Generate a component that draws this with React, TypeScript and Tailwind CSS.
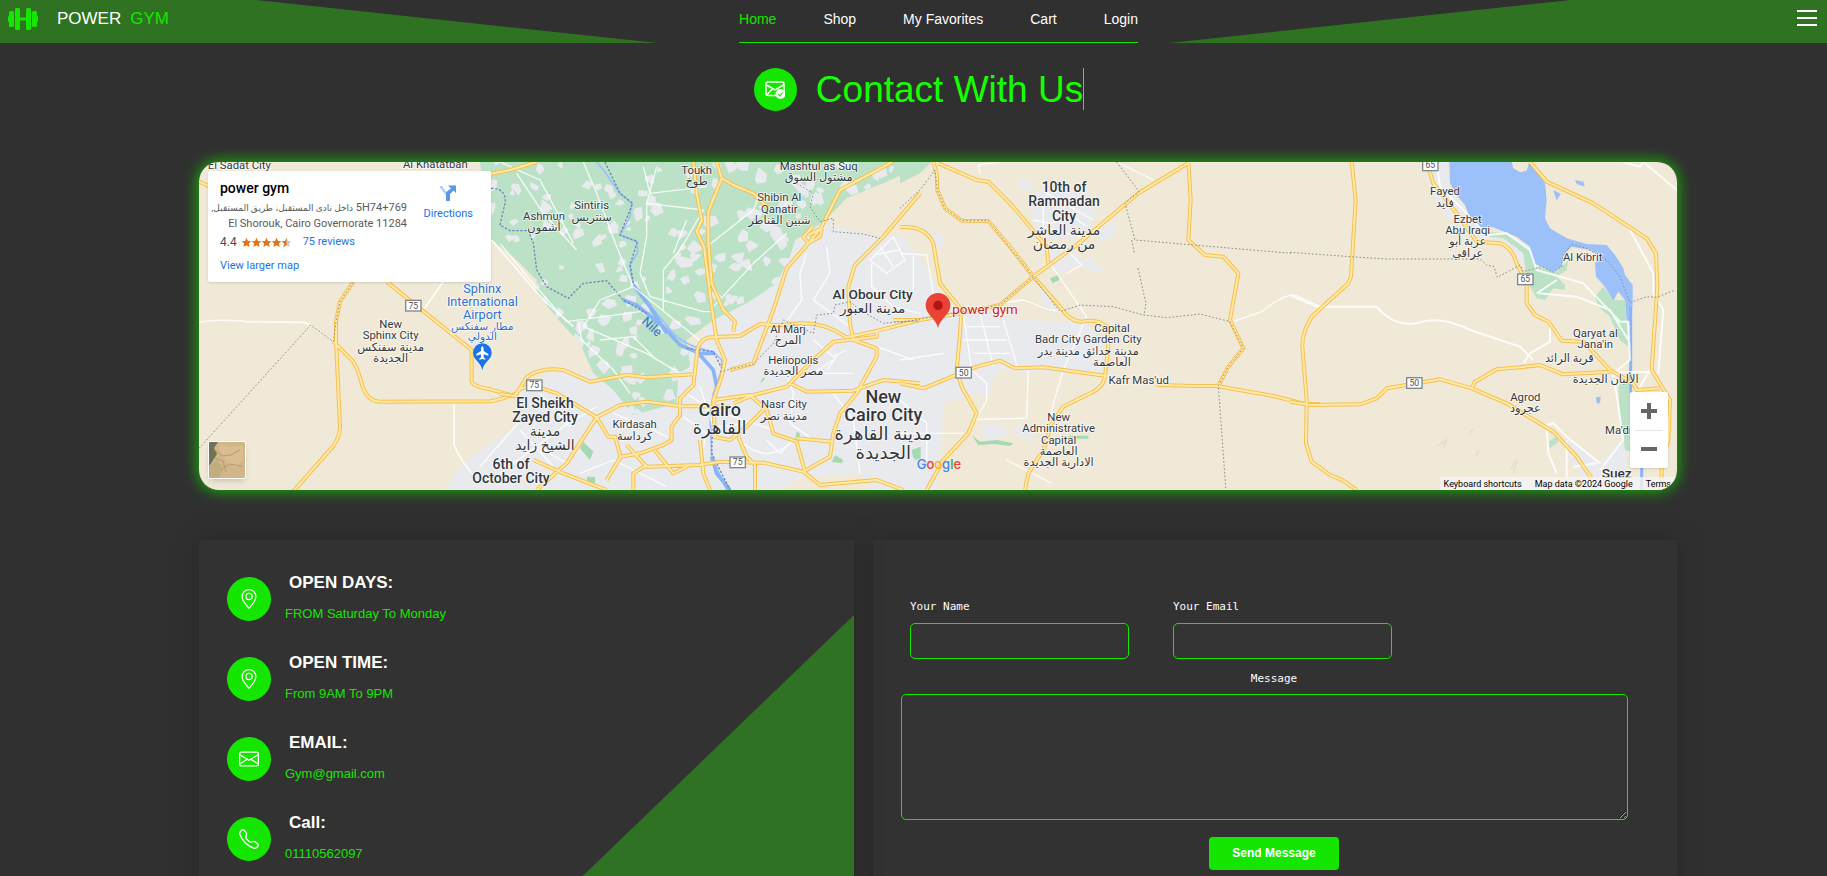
import React from "react";
import { BsEnvelope, BsGeoAlt, BsTelephone } from "react-icons/bs";

type Label = {
  x: number;
  y: number;
  lines: string[];
  size?: number;
  step?: number;
  weight?: number;
  color?: string;
};

const links = ["Home", "Shop", "My Favorites", "Cart", "Login"];

/* Map geometry: each list is drawn in its own quarter of the map canvas. */
const westRoads = [
  "M340 1054L445 935Q480 900 480 860L468 600V545L480 485L520 425",
  "M57 125L90 140",
  "M460 605L520 665Q535 690 545 730Q560 785 600 785L930 784Q960 780 1010 760",
  "M620 425L875 630V725Q880 740 930 748L1010 770",
  "M930 102L990 90L1070 66",
];

const cityRoads = [
  "M0 762L45 768L80 712Q120 680 190 690L270 725L380 705L440 712L580 703",
  "M45 768Q55 735 110 740L170 760L290 832L360 795L440 785L540 798L690 800",
  "M110 1050L200 970L290 832",
  "M290 832L325 890H345L362 950L320 1020",
  "M362 950L420 940L490 915L515 900V860L540 825V775L580 735L590 650Q590 600 630 592L720 588L780 552L840 556L900 550Q970 545 1040 592L1120 575L1260 540",
  "M380 915L440 980L600 975L660 965L790 968L910 995L990 950L1000 880L1020 820L1070 760L1130 650V625L1060 600L1050 550L1045 440L1065 375L1150 290L1260 160",
  "M460 925L520 1000L570 975",
  "M580 66L590 160L605 240L590 275L612 320L635 500L650 600L675 660L665 710L640 780L645 890",
  "M650 66L665 115L625 215V310L635 430L670 510L705 545L700 575",
  "M665 115L700 135L760 160L810 210",
  "M1200 50L1160 75L1020 150L965 260L925 310L860 385L820 510L760 670L690 690",
  "M925 285L965 265L960 290L925 310L910 290L940 258",
  "M640 780L750 765L800 810L820 880L890 905L915 995",
  "M700 790L760 765L860 740L940 660L1000 605L1130 590V570",
  "M870 730L920 755L1060 752L1150 720L1260 730",
  "M640 890L690 900L740 860L800 800",
  "M715 890L740 950L765 975V1050",
  "M600 900L610 1000L630 1050M890 895L1000 905",
  "M100 960L190 1000L320 1050M400 1050V1000L440 975",
  "M910 995L960 1035L1130 1020L1210 1050",
];

const eastRoads = [
  "M100 66L110 100L112 150L135 205L185 242L265 243L330 320L400 410L480 500Q510 545 545 545Q595 535 620 560L625 620L615 710Q610 745 560 765L490 800L455 850L430 930L385 1000L375 1050",
  "M115 70L230 120L265 125L335 195L410 285L440 320L445 370",
  "M-20 540L60 540L180 520L300 495L400 410L530 315L715 160L870 66",
  "M0 262Q75 255 100 310L120 430L185 510L180 580L170 690L185 740L230 820L205 880L130 960L80 1050",
  "M0 730L70 745L180 700L230 680L300 662L345 685L430 682L620 708",
  "M770 735L890 738L950 738L1120 768L1215 792L1260 792",
  "M865 66L872 180L865 300L915 345L970 350L1015 400L990 540L1030 625L985 680L955 738",
];

const suezRoads = [
  "M185 66L197 180L183 410L175 430L65 530Q35 580 37 620L50 780L48 910L65 965L120 1005L160 1022L200 1050",
  "M0 785L60 795L210 793L260 775L290 745L350 735L450 718L545 745L650 790L790 875L860 950L905 1015",
  "M415 80L430 130L500 220L560 305L630 310Q665 320 680 370L710 430V490L735 525L775 545L815 602L880 605L960 690L1030 730L1040 750L1110 745",
  "M720 66L770 125L910 190L1070 295L1098 340L1102 440L1085 690L1140 780L1135 900L1115 970V1050",
  "M545 745L555 725L620 688L690 682L750 675L820 703L960 695",
];

const cityStreets = [
  "M250 66L290 160L350 320L400 440L610 610",
  "M470 80L440 190V290L420 400L450 470L610 515L640 515",
  "M0 310L90 420L200 545L420 515",
  "M440 190L610 210L540 330L490 390V510",
  "M620 320L760 210L780 160",
  "M235 545L245 600L340 690L390 760",
  "M50 100L130 220L230 330M0 66L120 120L220 310",
  "M640 500L760 370L860 280",
  "M920 340L900 400L905 480L850 560M980 320L990 400L940 480L1050 560",
  "M1115 370V440L1180 500M1180 290L1215 360L1160 400L1110 360Z M1140 320L1180 380M1120 345L1200 330",
  "M1180 500L1260 520M1130 620L1240 660M940 600L1000 650L1040 630M960 700L1060 700",
  "M550 830L620 880L600 960M560 760L620 800L700 830L820 870M600 740L640 860L760 850",
  "M860 700L880 760L870 850L940 900M800 900L840 940L880 900M730 910Q800 970 870 910",
  "M0 1000L190 860L290 800M80 900L200 970M60 870L160 980M-60 980L80 820M120 760L210 860",
  "M400 440L300 480L250 560L440 640L540 700M300 600L400 590L470 660",
  "M430 80L450 160L620 140M560 240L520 340M340 820L440 860L500 890M240 1000L340 960L500 1040",
  "M1000 760L1060 840L1120 820M1060 840L1080 1000M940 700L1000 660M980 690L1010 650",
];

const eastStreets = [
  "M190 520L215 690L260 730V780L205 880M240 520L280 680M310 540L355 690M190 600L320 600M200 560L300 560M220 640L330 640",
  "M300 490L370 480L450 510L490 515M450 370L560 530L520 620L490 690M385 690L380 835L220 838",
  "M0 880L190 880M400 240L450 250L520 230L560 260M430 190V260L540 290M440 160L580 240M490 320L545 375L500 400",
  "M1000 545L1085 515Q1160 455 1190 467L1260 500M455 1030L320 960M490 690L460 790L450 850",
  "M0 340L80 345L110 520M40 350V460M0 660L130 640M0 780L80 850V960",
  "M650 66L760 120M240 100L235 75L300 66",
];

const suezStreets = [
  "M0 465L80 500H260Q310 560 380 550Q450 525 540 570L690 620L730 660",
  "M780 545V605L720 640L700 670",
  "M440 66L450 140L520 210L590 285L650 280L720 330L740 390L880 430L990 545H1015L1020 660L970 700L985 800L1000 900L930 990",
  "M745 460L860 470L960 510L1015 600M740 460L800 420M1000 66L1050 80L1060 66L1161 150",
  "M1020 270L1090 400V460L1120 510L1105 700M960 695L1085 697V680L1050 740V950",
  "M770 855L790 850L830 890L930 970M770 860L775 940L800 1000M830 900V1010M850 980L920 970",
];

const mapLabels: { dx: number; items: Label[] }[] = [
  {
    dx: 0,
    items: [
      { x: 178, y: 87, lines: ["El Sadat City"] },
      { x: 766, y: 83, lines: ["Al Khatatbah"] },
      { x: 632, y: 564, lines: ["New", "Sphinx City", "مدينة سفنكس", "الجديدة"] },
      { x: 907, y: 458, lines: ["Sphinx", "International", "Airport"], size: 38, step: 40, color: "#2f6fd0" },
      { x: 907, y: 570, lines: ["مطار سفنكس", "الدولي"], size: 32, step: 31, color: "#2f6fd0" },
      { x: 1095, y: 805, lines: ["El Sheikh", "Zayed City", "مدينة", "الشيخ زايد"], size: 42, step: 42, weight: 500 },
      { x: 993, y: 987, lines: ["6th of", "October City", "مدينة"], size: 42, step: 43, weight: 500 },
    ],
  },
  {
    dx: 960,
    items: [
      { x: 132, y: 240, lines: ["Ashmun", "أشمون"] },
      { x: 275, y: 208, lines: ["Sintiris", "سنتريس"] },
      { x: 590, y: 101, lines: ["Toukh", "طوخ"] },
      { x: 956, y: 89, lines: ["Mashtul as Suq", "مشتول السوق"] },
      { x: 838, y: 184, lines: ["Shibin Al", "Qanatir", "شبين القناطر"] },
      { x: 1118, y: 478, lines: ["Al Obour City", "مدينة العبور"], size: 41, step: 40, weight: 500 },
      { x: 864, y: 578, lines: ["Al Marj", "المرج"] },
      { x: 880, y: 672, lines: ["Heliopolis", "مصر الجديدة"] },
      { x: 852, y: 805, lines: ["Nasr City", "مدينة نصر"] },
      { x: 404, y: 865, lines: ["Kirdasah", "كرداسة"] },
      { x: 659, y: 827, lines: ["Cairo", "القاهرة"], size: 54, step: 54, weight: 500 },
      { x: 1150, y: 788, lines: ["New", "Cairo City", "مدينة القاهرة", "الجديدة"], size: 54, step: 56, weight: 500 },
    ],
  },
  {
    dx: 2160,
    items: [
      { x: 492, y: 156, lines: ["10th of", "Rammadan", "City", "مدينة العاشر", "من رمضان"], size: 42, step: 43, weight: 500 },
      { x: 636, y: 577, lines: ["Capital"] },
      { x: 565, y: 610, lines: ["Badr City Garden City", "مدينة حدائق  مدينة بدر"] },
      { x: 636, y: 677, lines: ["العاصمة"] },
      { x: 716, y: 731, lines: ["Kafr Mas'ud"] },
      { x: 476, y: 843, lines: ["New", "Administrative", "Capital", "العاصمة", "الادارية الجديدة"] },
    ],
  },
  {
    dx: 3330,
    items: [
      { x: 465, y: 166, lines: ["Fayed", "فايد"] },
      { x: 533, y: 248, lines: ["Ezbet", "Abu Iraqi", "عزبة أبو", "عراقي"] },
      { x: 878, y: 363, lines: ["Al Kibrit"] },
      { x: 916, y: 590, lines: ["Qaryat al", "Jana'in"] },
      { x: 838, y: 665, lines: ["قرية الرائد"] },
      { x: 947, y: 730, lines: ["الألبان الجديدة"] },
      { x: 706, y: 783, lines: ["Agrod", "عجرود"] },
      { x: 985, y: 881, lines: ["Ma'di"] },
      { x: 980, y: 1013, lines: ["Suez"], size: 41, weight: 500 },
    ],
  },
];

const shields = [
  { x: 700, y: 497, n: "75" },
  { x: 1063, y: 736, n: "75" },
  { x: 1673, y: 967, n: "75" },
  { x: 2351, y: 698, n: "50" },
  { x: 3703, y: 729, n: "50" },
  { x: 3751, y: 76, n: "65" },
  { x: 4036, y: 418, n: "65" },
];

const green =
  "M-60 66H1250L1225 95L1150 130L1100 150L1040 175L1000 215L965 250L885 300L870 350L830 430L740 490L640 540L560 600L570 680L535 700L530 790L400 825L340 750L280 700L240 610L180 545L110 460V420L40 350L-27 300Z";

const urban =
  "M-170 1054L-110 970L60 850V750L150 700L290 700L560 640L640 540L740 490L830 430L880 300L965 250L1140 290L1200 285L1250 340L1310 440L1350 510L1450 520L1580 540L1760 550L1810 610L1805 695L1690 700L1500 690L1450 750L1330 790L1325 900L1310 1054H1120L1080 1000L900 1015L820 1054Z";

function patches() {
  let seed = 11;
  const next = () => {
    seed = (seed * 16807) % 2147483647;
    return seed / 2147483647;
  };
  const shapes: string[] = [];
  for (let i = 0; i < 280; i++) {
    const x = -40 + next() * 1250;
    const y = 60 + next() * 760;
    const r = 8 + next() * 17;
    const points = [0, 1, 2, 3, 4].map((k) => {
      const a = (k / 5) * Math.PI * 2 + next();
      const q = r * (0.6 + next() * 0.6);
      return `${Math.round(x + Math.cos(a) * q)} ${Math.round(y + Math.sin(a) * q)}`;
    });
    shapes.push(`M${points.join("L")}Z`);
  }
  return shapes.join("");
}

const farmPatches = patches();

function Roads({ list, dx }: { list: string[]; dx: number }) {
  const d = list.join("");
  return (
    <g transform={`translate(${dx} 0)`} fill="none" strokeLinejoin="round">
      <path d={d} stroke="#f7c04a" strokeWidth="12" />
      <path d={d} stroke="#ffe9a8" strokeWidth="6" />
    </g>
  );
}

function Streets({ list, dx, width = 4 }: { list: string[]; dx: number; width?: number }) {
  return (
    <path
      d={list.join("")}
      transform={`translate(${dx} 0)`}
      fill="none"
      stroke="#ffffff"
      strokeOpacity="0.85"
      strokeWidth={width}
      strokeLinejoin="round"
    />
  );
}

function MapText({ x, y, lines, size = 34, step = 34, weight = 400, color = "#33373b" }: Label) {
  return (
    <text
      textAnchor="middle"
      fontSize={size}
      fontWeight={weight}
      fill={color}
      stroke="#ffffff"
      strokeWidth="5"
      strokeOpacity="0.8"
      strokeLinejoin="round"
      paintOrder="stroke"
    >
      {lines.map((line, i) => (
        <tspan key={line} x={x} y={y + i * step}>
          {line}
        </tspan>
      ))}
    </text>
  );
}

function MapCanvas() {
  return (
    <svg
      viewBox="57 66 4434 984"
      preserveAspectRatio="xMidYMid slice"
      className="block h-full w-full font-['Roboto','DejaVu_Sans',sans-serif]"
      role="img"
      aria-label="Map around power gym"
    >
      <defs>
        <clipPath id="farm">
          <path d={green} />
        </clipPath>
      </defs>
      <rect x="57" y="66" width="4434" height="984" fill="#f0e9d8" />
      <g transform="translate(960 0)">
        <path d={urban} fill="#e8eaed" />
        <path d={green} fill="#bbe2c6" />
        <path d={farmPatches} fill="#e8eaed" clipPath="url(#farm)" />
        <path d="M250 905L280 935L270 960L240 925ZM260 1010H285V1030H262ZM890 875L900 880L895 910L885 900ZM1005 945L1030 960L1025 970L995 965ZM1235 930L1262 920V955L1245 960ZM780 730L790 712L795 718Z" fill="#a5d9b4" />
        <path d="M290 66L310 90L360 160L395 190L390 230L360 285L412 305V340L390 375L400 440L440 485L520 580Q560 620 640 635L665 660V690L640 760L630 830L635 950L680 1050" fill="none" stroke="#9cc0f9" strokeWidth="5" />
        <path d="M370 480L410 495L490 560L540 615L600 640L645 640M400 435L450 500L500 580M600 645L640 690L650 740M635 950L650 1000L690 1050" fill="none" stroke="#8ab4f8" strokeWidth="11" />
        <path d="M-27 145Q20 145 15 190L0 255L30 272H85L100 310L110 390L140 440L205 475L250 430L320 422L370 480L440 520M315 66L360 160L398 190L360 285L412 305L390 375L402 440M560 625L640 635L668 690L640 770L635 940L690 1050" fill="none" stroke="#6b86ba" strokeWidth="4" strokeDasharray="7 5" />
      </g>
      <g transform="translate(2160 0)" fill="#e8eaed">
        <path d="M390 165L440 150L560 145L585 220L570 260L530 290L440 300L400 240ZM355 110L395 130L385 155L360 145ZM440 310L520 320L550 370L480 400L440 370ZM90 280L140 290L130 320L95 315ZM410 430L440 450L470 530L430 490ZM530 370L575 350L612 395L560 390ZM230 740L270 720L280 755L240 770ZM240 855L300 850L330 880L260 910ZM340 860L410 850L400 900L350 890ZM590 280L650 240L640 290L600 310Z" />
        <path d="M0 66H95L60 100L0 130Z" fill="#bbe2c6" />
        <path d="M450 415L475 405L478 420L458 430ZM215 885L240 905L290 900L340 910L330 918L280 912L235 915ZM505 887H565V896H505ZM35 930L55 925L60 950L40 955Z" fill="#a5d9b4" />
      </g>
      <g transform="translate(3330 0)">
        <path d="M400 66H475V140L530 215L590 280L720 330L735 380L680 360L640 300L540 290L440 200Z M830 890L930 970L990 900L1010 930L1010 1054H910L830 950ZM720 845L790 855L780 865ZM745 490L770 480V500Z" fill="#e8eaed" />
        <path d="M590 275L650 280L720 330L735 380L800 395L835 360L830 390L800 410L825 435V450L790 445L765 480L740 475L710 420L700 340L640 295L600 290ZM915 470L940 440L970 480H1005L1015 620L990 600L960 530L925 500ZM985 740L1020 700V935L1005 930L990 830ZM775 905L800 890L805 905L780 925ZM705 300L745 303L740 312Z" fill="#bbe2c6" />
        <path d="M478 66H665L670 85L690 97L710 92L718 66L745 95L765 130L770 180L765 235L780 265L830 295L890 312L950 315L975 345L1000 385L1005 405L1028 435V490L1022 560L1010 540L1005 480L985 455L970 482L945 440L918 410L915 370L935 350L900 330L845 320L820 345L815 380L790 397L750 378L730 370L720 320L680 290L610 262L570 262L540 235L525 195L500 165L480 130ZM790 150L812 162L800 182ZM855 120L880 125L885 140L860 132ZM918 772L932 770L930 790H920Z" fill="#9cc0f9" />
        <path d="M670 66L675 85L692 95L708 90L715 66Z" fill="#f0e9d8" />
        <path d="M1022 500V760M1055 980V1054" fill="none" stroke="#8ab4f8" strokeWidth="9" />
        <path d="M440 920L470 900L460 925M540 880L550 865M660 990L680 960L670 1000M560 950L565 930" stroke="#e6dfcc" strokeWidth="5" fill="none" />
      </g>

      <Streets list={["M57 548Q100 535 200 545L370 547L392 555M790 425L730 510M822 790V915Q840 960 880 1005M935 300L1090 480L1180 560"]} dx={0} width={5} />
      <Streets list={cityStreets} dx={960} />
      <Streets list={eastStreets} dx={2160} />
      <Streets list={suezStreets} dx={3330} width={6} />
      <Roads list={westRoads} dx={0} />
      <Roads list={cityRoads} dx={960} />
      <Roads list={eastRoads} dx={2160} />
      <Roads list={suezRoads} dx={3330} />

      <g fill="none" stroke="#8d8d8d" strokeWidth="3" strokeDasharray="5 6">
        <path d="M57 925L392 555L460 605L468 545L480 485L520 425" />
        <path
          transform="translate(960 0)"
          d="M890 130L940 160L930 200L960 245L1000 235V275L1090 282L1140 295M660 695L760 672L820 610L850 540L940 580L950 525L1000 520L1005 495L1050 485L1080 510L1150 550L1260 540"
        />
        <path
          transform="translate(2160 0)"
          d="M0 205L60 150L105 90L112 150L135 205L185 242H265L400 410L480 515L540 495L640 500L730 525L800 533L900 522L990 545L1030 625L985 680L955 738L978 1054M650 66L718 155L675 190L705 300L1173 340M695 300L703 340M714 385L738 490L732 525M400 410L300 495L0 548"
        />
        <path
          transform="translate(3330 0)"
          d="M0 337L180 350L290 357H570L590 375L612 380L622 412L690 375L700 395L755 380L790 397L815 380L820 345L845 312L890 325L950 360L990 410L1020 488L1070 470L1100 472L1155 450"
        />
      </g>

      {shields.map((s) => (
        <g key={`${s.x}-${s.y}`}>
          <rect x={s.x - 23} y={s.y - 16} width="46" height="32" fill="#ffffff" stroke="#80868b" strokeWidth="4" />
          <text x={s.x} y={s.y + 9} textAnchor="middle" fontSize="26" fill="#4d5156">
            {s.n}
          </text>
        </g>
      ))}

      {mapLabels.map((group) => (
        <g key={group.dx} transform={`translate(${group.dx} 0)`}>
          {group.items.map((item) => (
            <MapText key={item.lines[0]} {...item} />
          ))}
        </g>
      ))}
      <text x="1414" y="572" fontSize="38" fill="#2f6fd0" textAnchor="middle" transform="rotate(42 1414 562)">
        Nile
      </text>

      <g>
        <path d="M907 691C903 665 879 660 879 638A28 28 0 0 1 935 638C935 660 911 665 907 691Z" fill="#1a73e8" />
        <path d="M907 619C911 619 911 626 911 633L925 642V647L911 643V652L916 656V659L907 657L898 659V656L903 652V643L889 647V642L903 633C903 626 903 619 907 619Z" fill="#ffffff" />
      </g>
      <g transform="translate(2160 0)">
        <path d="M114 564C108 535 77 525 77 496A37 37 0 0 1 151 496C151 525 120 535 114 564Z" fill="#ea4335" />
        <circle cx="114" cy="496" r="14" fill="#b31412" />
        <text x="157" y="522" fontSize="40" fill="#c5221f" stroke="#ffffff" strokeWidth="5" strokeOpacity="0.7" paintOrder="stroke">
          power gym
        </text>
        <text x="50" y="988" fontSize="39" fontWeight="500" className="font-['Inter',sans-serif]">
          <tspan fill="#4285f4">G</tspan>
          <tspan fill="#ea4335">o</tspan>
          <tspan fill="#fbbc05">o</tspan>
          <tspan fill="#4285f4">g</tspan>
          <tspan fill="#34a853">l</tspan>
          <tspan fill="#ea4335">e</tspan>
        </text>
      </g>
    </svg>
  );
}

function Dumbbell() {
  return (
    <svg viewBox="0 0 30 22" className="h-[22px] w-[30px] fill-[#15e600]" aria-hidden="true">
      <rect x="0" y="8" width="3" height="6" rx="1" />
      <rect x="1" y="3" width="5" height="16" rx="1.5" />
      <rect x="7" y="0" width="5" height="22" rx="1.5" />
      <rect x="11" y="9.5" width="8" height="3" />
      <rect x="18" y="0" width="5" height="22" rx="1.5" />
      <rect x="24" y="3" width="5" height="16" rx="1.5" />
      <rect x="27" y="8" width="3" height="6" rx="1" />
    </svg>
  );
}

function Stars() {
  const star = "M6 0.8L7.6 4.3L11.4 4.7L8.6 7.2L9.4 11L6 9L2.6 11L3.4 7.2L0.6 4.7L4.4 4.3Z";
  return (
    <svg viewBox="0 0 56 12" className="h-[11px] w-[51px]" role="img" aria-label="4.4 stars">
      {[0, 11, 22, 33].map((x) => (
        <path key={x} d={star} transform={`translate(${x} 0)`} fill="#e7711b" />
      ))}
      <path d={star} transform="translate(44 0)" fill="#c8c8c8" />
      <path d="M6 0.8V9L2.6 11L3.4 7.2L0.6 4.7L4.4 4.3Z" transform="translate(44 0)" fill="#e7711b" />
    </svg>
  );
}

function PlaceCard() {
  return (
    <div className="absolute top-[9px] left-[9px] flex h-[111px] w-[283px] justify-between rounded-xs bg-white pt-[9px] pr-[18px] pl-3 shadow font-['Roboto','DejaVu_Sans',sans-serif]">
      <div className="w-[187px]">
        <h2 className="text-sm leading-4 font-medium text-black">power gym</h2>
        <p dir="rtl" className="mt-1 text-[11px] leading-[15px] whitespace-nowrap text-[#5b5b5b]">
          <span dir="ltr">5H74+769</span> <span className="text-[9px]">داخل نادى المستقبل، طريق المستقبل,</span>
          <br />
          <span dir="ltr">El Shorouk, Cairo Governorate 11284</span>
        </p>
        <div className="mt-[3px] flex h-4 items-center text-[11px] text-[#1a73e8]">
          <span className="text-xs text-[#4d4d4d]">4.4</span>
          <span className="ml-1">
            <Stars />
          </span>
          <a href="#reviews" className="ml-[11px]">
            75 reviews
          </a>
        </div>
        <a href="#larger" className="mt-[9px] block text-[11px] leading-[14px] text-[#1a73e8]">
          View larger map
        </a>
      </div>
      <a href="#directions" className="flex flex-col items-center pt-1 text-[11px] leading-4 text-[#1a73e8]">
        <svg viewBox="0 0 18 18" className="mb-1 h-[18px] w-[18px]" aria-hidden="true">
          <path d="M1 2H4V4L9 9V13L6 10L1 4Z" fill="#b5d0f6" />
          <path d="M7 17V10Q7 8 8.500 7L12 4.500L9 1.500H17V9L14.500 6.500L11 10V17Z" fill="#5a97e8" />
        </svg>
        Directions
      </a>
    </div>
  );
}

function SatelliteThumb() {
  return (
    <button
      type="button"
      aria-label="Show satellite imagery"
      className="absolute bottom-[11px] left-[9px] h-[38px] w-[38px] overflow-hidden rounded-xs border border-white shadow-md"
    >
      <svg viewBox="0 0 36 36" className="h-full w-full" aria-hidden="true">
        <rect width="36" height="36" fill="#d0b688" />
        <path d="M0 0H9L5 6L8 12L3 20L0 24Z" fill="#6f7457" />
        <path d="M0 24L8 18L14 26L10 36H0Z" fill="#c0ad80" />
        <path d="M10 2L22 5L34 3V18L27 26L18 20L12 12Z" fill="#dabd90" />
        <path d="M7 9L14 14L22 13L31 8M12 28L20 22L33 24M6 16L14 19L17 30" fill="none" stroke="#b39c70" />
      </svg>
    </button>
  );
}

function MapPanel() {
  return (
    <section
      aria-label="Location"
      className="relative h-[328px] overflow-hidden rounded-[20px] shadow-[0_0_14px_2px_#18a808]"
    >
      <MapCanvas />
      <PlaceCard />
      <SatelliteThumb />
      <div className="absolute right-[9px] bottom-[22px] flex h-[76px] w-[38px] flex-col items-center rounded-xs bg-white shadow">
        <button type="button" aria-label="Zoom in" className="flex w-full flex-1 items-center justify-center">
          <svg viewBox="0 0 16 16" className="h-4 w-4 fill-[#666666]">
            <path d="M6 0H10V6H16V10H10V16H6V10H0V6H6Z" />
          </svg>
        </button>
        <span className="h-px w-7 bg-[#e6e6e6]" />
        <button type="button" aria-label="Zoom out" className="flex w-full flex-1 items-center justify-center">
          <svg viewBox="0 0 16 16" className="h-4 w-4 fill-[#666666]">
            <path d="M0 6H16V10H0Z" />
          </svg>
        </button>
      </div>
      <div className="absolute right-0 bottom-0 flex h-[13px] items-center gap-[13px] bg-[#f5f5f5]/80 pt-0.5 pr-1.5 pl-1 text-[9px] leading-[11px] whitespace-nowrap text-black font-['Roboto',sans-serif]">
        <button type="button">Keyboard shortcuts</button>
        <span>Map data ©2024 Google</span>
        <a href="#terms">Terms</a>
      </div>
    </section>
  );
}

const details = [
  { title: "OPEN DAYS:", text: "FROM Saturday To Monday", Icon: BsGeoAlt },
  { title: "OPEN TIME:", text: "From 9AM To 9PM", Icon: BsGeoAlt },
  { title: "EMAIL:", text: "Gym@gmail.com", Icon: BsEnvelope },
  { title: "Call:", text: "01110562097", Icon: BsTelephone },
];

function Details() {
  return (
    <section className="relative bg-[#323232] px-7 pt-[33px] shadow-[0_0_20px_#282828]">
      <div className="absolute top-[75px] right-0 bottom-0 w-[289px] bg-[#2f7224] [clip-path:polygon(100%_0,100%_100%,0_100%)]" />
      <ul className="relative">
        {details.map(({ title, text, Icon }) => (
          <li key={title} className="flex h-20 gap-3.5">
            <span className="mt-1 flex h-11 w-11 shrink-0 items-center justify-center rounded-full bg-[#15e600] text-white">
              <Icon size={20} aria-hidden="true" />
            </span>
            <div>
              <h2 className="pl-1 text-[17px] leading-5 font-bold text-white">{title}</h2>
              <p className="mt-[13px] text-[13px] leading-4 text-[#15e600]">{text}</p>
            </div>
          </li>
        ))}
      </ul>
    </section>
  );
}

function ContactForm() {
  const label = "text-[11px] leading-4 text-white font-['DejaVu_Sans_Mono',monospace]";
  const field = "rounded-[5px] border border-[#15e600] bg-[#343434] px-3 text-sm text-white outline-none";
  return (
    <form
      className="bg-[#323232] pt-[59px] pr-[49px] pl-7 shadow-[0_0_20px_#282828]"
      onSubmit={(e) => e.preventDefault()}
    >
      <div className="flex gap-11 px-[9px]">
        <div className="flex w-[219px] flex-col gap-2">
          <label htmlFor="name" className={label}>
            Your Name
          </label>
          <input id="name" type="text" className={`${field} h-9`} />
        </div>
        <div className="flex w-[219px] flex-col gap-2">
          <label htmlFor="email" className={label}>
            Your Email
          </label>
          <input id="email" type="email" className={`${field} h-9`} />
        </div>
      </div>
      <div className="mt-3 flex flex-col items-center">
        <label htmlFor="message" className={`${label} pl-[19px]`}>
          Message
        </label>
        <textarea id="message" className={`${field} mt-[7px] h-[126px] w-full resize`} />
        <button
          type="submit"
          className="mt-[17px] ml-[19px] h-[33px] rounded bg-[#15e600] px-[23px] pb-0.5 text-xs font-bold whitespace-nowrap text-white"
        >
          Send Message
        </button>
      </div>
    </form>
  );
}

export default function App() {
  return (
    <div className="flex min-h-screen flex-col bg-[#303030] font-['Liberation_Sans',Arial,sans-serif]">
      <header className="relative flex h-[43px] justify-between">
        <div className="absolute inset-y-0 left-0 w-[36%] bg-[#2e7222] [clip-path:polygon(0_0,39%_0,100%_100%,0_100%)]" />
        <div className="absolute inset-y-0 right-0 w-[36%] bg-[#2e7222] [clip-path:polygon(61%_0,100%_0,100%_100%,0_100%)]" />
        <a href="#home" className="relative flex flex-1 items-center pb-1.5 pl-2 text-[17px] text-white">
          <Dumbbell />
          <span className="ml-[19px]">POWER</span>
          <span className="ml-[9px] text-[#15e600]">GYM</span>
        </a>
        <nav className="relative ml-[52px] flex gap-[47px] border-b border-[#15e600] pt-[9px] text-sm text-white">
          {links.map((name, i) => (
            <a key={name} href={`#${name}`} className={i === 0 ? "text-[#15e600]" : ""}>
              {name}
            </a>
          ))}
        </nav>
        <div className="relative flex flex-1 items-start justify-end pt-2.5 pr-2.5">
          <button type="button" aria-label="Open menu" className="flex w-5 flex-col gap-[5px]">
            <span className="h-0.5 bg-white" />
            <span className="h-0.5 bg-white" />
            <span className="h-0.5 bg-white" />
          </button>
        </div>
      </header>

      <main className="flex flex-1 flex-col pr-[150px] pl-[199px]">
        <div className="mt-[25px] flex items-start justify-center gap-[19px] pr-[38px]">
          <span className="flex h-[43px] w-[43px] items-center justify-center rounded-full bg-[#15e600] text-white">
            <svg viewBox="0 0 20 18" className="h-[18px] w-5" aria-hidden="true">
              <rect x="1" y="1" width="18" height="13.5" rx="2" fill="none" stroke="currentColor" strokeWidth="1.500" />
              <path d="M1.500 4L10 9L18.500 4M1.500 14L7.500 8" fill="none" stroke="currentColor" strokeWidth="1.500" />
              <circle cx="15.500" cy="13" r="5" fill="currentColor" />
              <path d="M13.500 13L15 14.800L17.500 11.500" fill="none" stroke="#15e600" strokeWidth="1.200" />
            </svg>
          </span>
          <h1 className="h-[42px] border-r border-[#15ff00] text-[37px] leading-[44px] whitespace-nowrap text-[#15ff00]">
            Contact With Us
          </h1>
        </div>
        <div className="mt-[51px]">
          <MapPanel />
        </div>
        <div className="mt-[50px] grid flex-1 grid-cols-[655fr_804fr] gap-[19px]">
          <Details />
          <ContactForm />
        </div>
      </main>
    </div>
  );
}
